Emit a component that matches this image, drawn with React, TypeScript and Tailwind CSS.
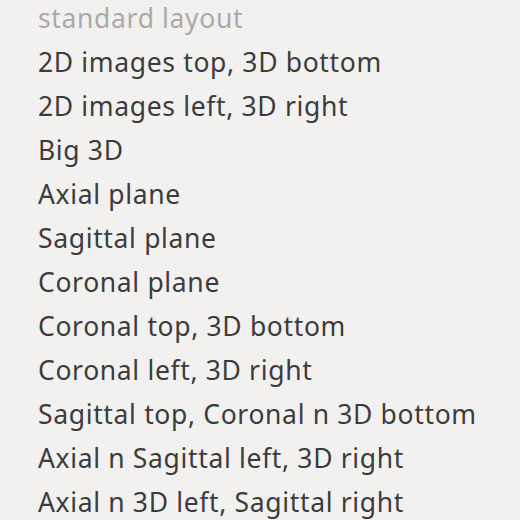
import React from 'react';

const items = [
  'standard layout',
  '2D images top, 3D bottom',
  '2D images left, 3D right',
  'Big 3D',
  'Axial plane',
  'Sagittal plane',
  'Coronal plane',
  'Coronal top, 3D bottom',
  'Coronal left, 3D right',
  'Sagittal top, Coronal n 3D bottom',
  'Axial n Sagittal left, 3D right',
  'Axial n 3D left, Sagittal right',
];

const App: React.FC = () => {
  return (
    <div className="w-[520px] h-[520px] overflow-hidden bg-[#f2f1f0] font-['Noto_Sans',sans-serif]">
      <ul className="flex flex-col -mt-[3px]">
        {items.map((label, i) => (
          <li
            key={label}
            className={
              i === 0
                ? 'h-[44px] flex items-center pl-[38px] text-[26.5px] tracking-[0.65px] text-[#acaaa8]'
                : 'h-[44px] flex items-center pl-[38px] text-[26.5px] tracking-[0.65px] text-[#3c3c3c]'
            }
          >
            {label}
          </li>
        ))}
      </ul>
    </div>
  );
};

export default App;
